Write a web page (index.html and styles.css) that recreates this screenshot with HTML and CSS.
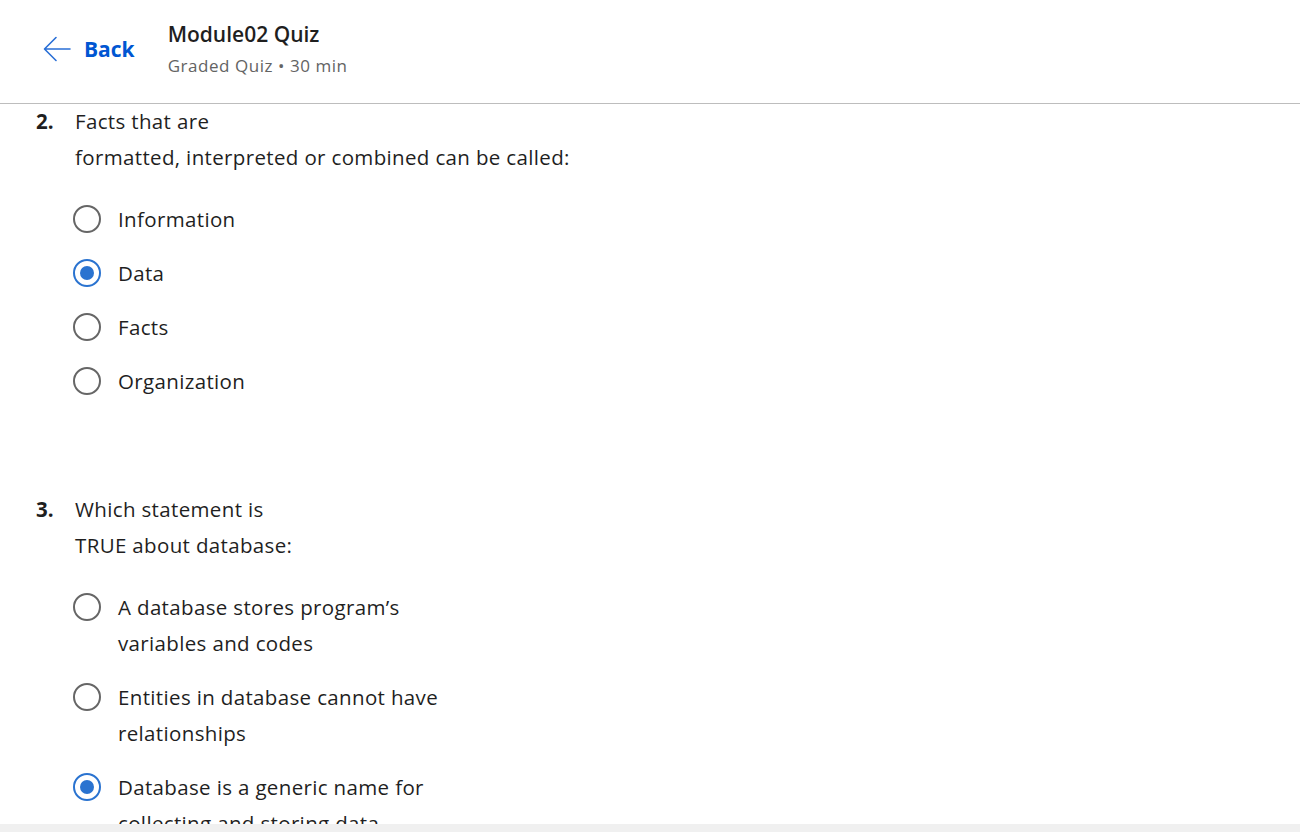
FILE: index.html
```html
<!DOCTYPE html>
<html lang="en">
<head>
<meta charset="utf-8">
<title>Module02 Quiz</title>
<link rel="stylesheet" href="styles.css">
</head>
<body>
<div class="app">
  <header class="topbar">
    <a class="back" href="#">
      <svg class="back-icon" width="28" height="26" viewBox="0 0 28 26" aria-hidden="true">
        <path d="M27 13 H2 M13 1.5 L1.5 13 L13 24.5" fill="none" stroke="#2a6fd6" stroke-width="1.6" stroke-linecap="round" stroke-linejoin="round"/>
      </svg>
      <span class="back-label">Back</span>
    </a>
    <div class="title-block">
      <div class="title">Module02 Quiz</div>
      <div class="subtitle">Graded Quiz • 30 min</div>
    </div>
  </header>
  <main class="content">
    <section class="question">
      <div class="q-head">
        <span class="q-num">2.</span>
        <div class="q-text">Facts that are<br>formatted, interpreted or combined can be called:</div>
      </div>
      <div class="options">
        <label class="option"><span class="radio"></span><span class="opt-text">Information</span></label>
        <label class="option"><span class="radio checked"></span><span class="opt-text">Data</span></label>
        <label class="option"><span class="radio"></span><span class="opt-text">Facts</span></label>
        <label class="option"><span class="radio"></span><span class="opt-text">Organization</span></label>
      </div>
    </section>
    <section class="question q-next">
      <div class="q-head">
        <span class="q-num">3.</span>
        <div class="q-text">Which statement is<br>TRUE about database:</div>
      </div>
      <div class="options">
        <label class="option"><span class="radio"></span><span class="opt-text">A database stores program’s<br>variables and codes</span></label>
        <label class="option"><span class="radio"></span><span class="opt-text">Entities in database cannot have<br>relationships</span></label>
        <label class="option"><span class="radio checked"></span><span class="opt-text">Database is a generic name for<br>collecting and storing data</span></label>
      </div>
    </section>
  </main>
  <div class="bottom-strip"></div>
</div>
</body>
</html>
```
FILE: styles.css
```css
html, body {
  margin: 0;
  padding: 0;
  background: #ffffff;
}
body {
  font-family: "Open Sans", "Noto Sans", sans-serif;
  color: #1f1f1f;
}
.app {
  height: 832px;
  display: flex;
  flex-direction: column;
  overflow: hidden;
}
.topbar {
  flex: 0 0 auto;
  height: 103px;
  border-bottom: 1px solid #bdbdbd;
  display: flex;
  align-items: flex-start;
  box-sizing: content-box;
}
.back {
  display: flex;
  align-items: center;
  gap: 13px;
  margin: 36px 0 0 43px;
  text-decoration: none;
  color: #0056d2;
  height: 26px;
}
.back-icon { display: block; }
.back-label {
  font-size: 21px;
  font-weight: 700;
  line-height: 26px;
}
.title-block {
  margin: 20px 0 0 33px;
}
.title {
  font-size: 21px;
  font-weight: 600;
  line-height: 28px;
  color: #1f1f1f;
}
.subtitle {
  font-size: 17px;
  letter-spacing: 0.55px;
  line-height: 24px;
  margin-top: 6px;
  color: #636363;
}
.content {
  flex: 1 1 auto;
  overflow: hidden;
  padding: 0 0 0 36px;
}
.question {
  display: flex;
  flex-direction: column;
}
.q-next {
  margin-top: 93px;
}
.q-head {
  display: flex;
  font-size: 20.5px;
  letter-spacing: 0.35px;
  line-height: 36px;
  margin-top: -1px;
}
.q-num {
  width: 39px;
  font-weight: 700;
  letter-spacing: 0;
}
.q-text {
  color: #1f1f1f;
}
.options {
  display: flex;
  flex-direction: column;
  gap: 18px;
  margin: 26px 0 0 37px;
}
.option {
  display: flex;
  align-items: flex-start;
  gap: 17px;
  font-size: 20.5px;
  letter-spacing: 0.35px;
  line-height: 36px;
  cursor: pointer;
}
.radio {
  flex: 0 0 auto;
  width: 24px;
  height: 24px;
  border: 2.5px solid #666666;
  border-radius: 50%;
  margin-top: 3.5px;
  position: relative;
}
.radio.checked {
  border-color: #2a73d0;
}
.radio.checked::after {
  content: "";
  position: absolute;
  left: 5px;
  top: 5px;
  width: 14px;
  height: 14px;
  border-radius: 50%;
  background: #2a73d0;
}
.bottom-strip {
  flex: 0 0 8px;
  background: #f0f0f0;
}
```
